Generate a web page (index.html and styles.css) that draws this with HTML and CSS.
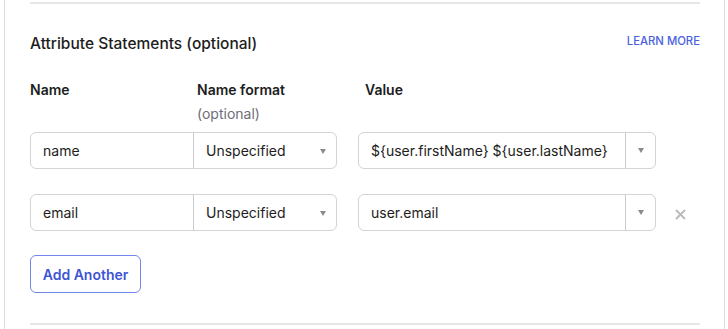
FILE: index.html
```html
<!DOCTYPE html>
<html>
<head>
<meta charset="utf-8">
<link rel="stylesheet" href="styles.css">
</head>
<body>
<div class="panel">
  <div class="divider"></div>
  <div class="title-row">
    <h2 class="title">Attribute Statements (optional)</h2>
    <a class="learn" href="#">LEARN MORE</a>
  </div>
  <div class="heads">
    <div class="head col-name">Name</div>
    <div class="head col-format">Name format<span class="opt">(optional)</span></div>
    <div class="head col-value">Value</div>
  </div>
  <div class="rows">
    <div class="row">
      <div class="pair">
        <div class="field name-field">name</div>
        <div class="field select-field">Unspecified<span class="caret"></span></div>
      </div>
      <div class="combo">
        <div class="combo-text">${user.firstName} ${user.lastName}</div>
        <div class="combo-btn"><span class="caret"></span></div>
      </div>
      <div class="remove"></div>
    </div>
    <div class="row">
      <div class="pair">
        <div class="field name-field">email</div>
        <div class="field select-field">Unspecified<span class="caret"></span></div>
      </div>
      <div class="combo">
        <div class="combo-text">user.email</div>
        <div class="combo-btn"><span class="caret"></span></div>
      </div>
      <div class="remove">
        <svg width="11" height="11" viewBox="0 0 11 11"><path d="M1 1L10 10M10 1L1 10" stroke="#b8b8bd" stroke-width="1.8" fill="none"/></svg>
      </div>
    </div>
  </div>
  <button class="add">Add Another</button>
  <div class="divider bottom"></div>
</div>
</body>
</html>
```
FILE: styles.css
```css
* { box-sizing: border-box; }
html, body { margin: 0; padding: 0; background: #fff; }
body {
  font-family: Inter, "Noto Sans", "Liberation Sans", sans-serif;
  color: #1d1d21;
}
.panel {
  margin-left: 4px;
  width: 721px;
  height: 329px;
  border-left: 1px solid #dcdcdc;
  border-right: 1px solid #dcdcdc;
  padding: 2px 24px 0 25px;
  display: flex;
  flex-direction: column;
}
.divider { height: 2px; background: #e6e6e6; width: 670px; flex: none; }
.title-row {
  display: flex;
  justify-content: space-between;
  align-items: flex-start;
  margin-top: 28px;
  width: 670px;
}
.title { margin: 0; font-size: 15.5px; font-weight: 500; line-height: 24px; }
.learn {
  color: #4a62e0;
  font-size: 11.3px;
  font-weight: 500;
  text-decoration: none;
  line-height: 18px;
}
.heads { display: flex; margin-top: 24px; }
.head { font-size: 14px; font-weight: 600; line-height: 20px; }
.col-name { width: 167px; }
.col-format { width: 167px; }
.col-value { padding-left: 1px; }
.opt { display: block; font-weight: 400; color: #6e6e78; margin-top: 4px; }
.rows { display: flex; flex-direction: column; gap: 25px; margin-top: 8px; }
.row { display: flex; align-items: stretch; height: 37px; }
.pair { display: flex; width: 307px; border: 1px solid #d3d3d8; border-radius: 6px; }
.field { font-size: 14px; line-height: 35px; }
.name-field { width: 163px; padding-left: 12px; border-right: 1.5px solid #c9c9ce; }
.select-field { flex: 1; padding-left: 12px; position: relative; }
.caret {
  display: inline-block;
  width: 0; height: 0;
  border-left: 3.5px solid transparent;
  border-right: 3.5px solid transparent;
  border-top: 5px solid #8a8a90;
}
.select-field .caret { position: absolute; right: 10px; top: 16px; }
.combo { display: flex; width: 298px; margin-left: 21px; border: 1px solid #d3d3d8; border-radius: 6px; }
.combo-text { flex: 1; font-size: 14px; line-height: 35px; padding-left: 12px; border-right: 1.5px solid #c9c9ce; }
.combo-btn { width: 29px; display: flex; align-items: center; justify-content: center; }
.remove { display: flex; align-items: center; padding-left: 19px; padding-top: 4px; }
.add {
  align-self: flex-start;
  margin-top: 24px;
  width: 111px;
  height: 38px;
  border: 1.5px solid #7088ec;
  border-radius: 6px;
  background: #fff;
  color: #3d55d4;
  font-family: inherit;
  font-size: 14px;
  font-weight: 600;
  padding: 0;
}
.bottom { margin-top: auto; margin-bottom: 4px; }
```
